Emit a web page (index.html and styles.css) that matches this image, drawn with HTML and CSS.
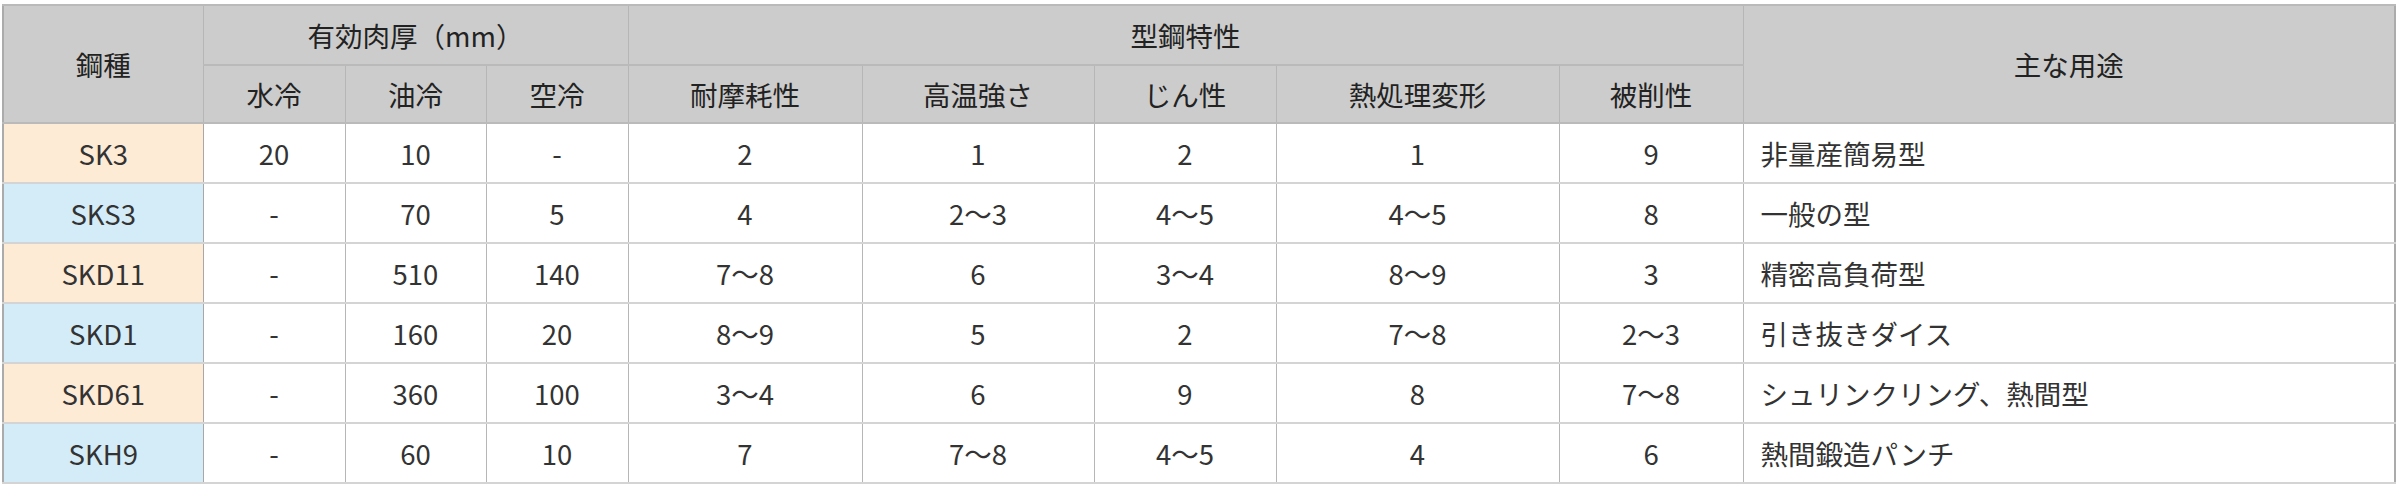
FILE: index.html
```html
<!DOCTYPE html>
<html lang="ja">
<head>
<meta charset="utf-8">
<title>型鋼特性</title>
<link rel="stylesheet" href="styles.css">
</head>
<body>
<table class="steel">
  <colgroup>
    <col class="c-name">
    <col class="c-w">
    <col class="c-o">
    <col class="c-a">
    <col class="c-wear">
    <col class="c-hot">
    <col class="c-tough">
    <col class="c-heat">
    <col class="c-mach">
    <col class="c-use">
  </colgroup>
  <thead>
    <tr class="h1">
      <th rowspan="2">鋼種</th>
      <th colspan="3">有効肉厚（mm）</th>
      <th colspan="5">型鋼特性</th>
      <th rowspan="2">主な用途</th>
    </tr>
    <tr class="h2">
      <th>水冷</th>
      <th>油冷</th>
      <th>空冷</th>
      <th>耐摩耗性</th>
      <th>高温強さ</th>
      <th>じん性</th>
      <th>熱処理変形</th>
      <th>被削性</th>
    </tr>
  </thead>
  <tbody>
    <tr>
      <td class="name orange">SK3</td>
      <td>20</td><td>10</td><td>-</td>
      <td>2</td><td>1</td><td>2</td><td>1</td><td>9</td>
      <td class="use">非量産簡易型</td>
    </tr>
    <tr>
      <td class="name blue">SKS3</td>
      <td>-</td><td>70</td><td>5</td>
      <td>4</td><td>2～3</td><td>4～5</td><td>4～5</td><td>8</td>
      <td class="use">一般の型</td>
    </tr>
    <tr>
      <td class="name orange">SKD11</td>
      <td>-</td><td>510</td><td>140</td>
      <td>7～8</td><td>6</td><td>3～4</td><td>8～9</td><td>3</td>
      <td class="use">精密高負荷型</td>
    </tr>
    <tr>
      <td class="name blue">SKD1</td>
      <td>-</td><td>160</td><td>20</td>
      <td>8～9</td><td>5</td><td>2</td><td>7～8</td><td>2～3</td>
      <td class="use">引き抜きダイス</td>
    </tr>
    <tr>
      <td class="name orange">SKD61</td>
      <td>-</td><td>360</td><td>100</td>
      <td>3～4</td><td>6</td><td>9</td><td>8</td><td>7～8</td>
      <td class="use">シュリンクリング、熱間型</td>
    </tr>
    <tr>
      <td class="name blue">SKH9</td>
      <td>-</td><td>60</td><td>10</td>
      <td>7</td><td>7～8</td><td>4～5</td><td>4</td><td>6</td>
      <td class="use">熱間鍛造パンチ</td>
    </tr>
  </tbody>
</table>
</body>
</html>
```
FILE: styles.css
```css
html, body {
  margin: 0;
  padding: 0;
  background: #ffffff;
}

body {
  padding: 4px 0 0 2px;
  font-family: "Noto Sans CJK JP", "Noto Sans", sans-serif;
  font-size: 27.5px;
  color: #333333;
}

.steel {
  border-collapse: collapse;
  table-layout: fixed;
  width: 2393px;
  border: 2px solid #ababab;
}

.c-name { width: 200px; }
.c-w { width: 142px; }
.c-o { width: 141px; }
.c-a { width: 142px; }
.c-wear { width: 234px; }
.c-hot { width: 232px; }
.c-tough { width: 182px; }
.c-heat { width: 283px; }
.c-mach { width: 184px; }
.c-use { width: 652px; }

.steel th,
.steel td {
  border-left: 1px solid #b6b6b6;
  border-right: 1px solid #b6b6b6;
  border-top: 2px solid #d4d4d4;
  border-bottom: 2px solid #d4d4d4;
  padding: 0;
  text-align: center;
  vertical-align: middle;
  font-weight: normal;
  line-height: 1.2;
}

.steel th {
  background: #cccccc;
  color: #222222;
  border-top-color: #bababa;
  border-bottom-color: #bababa;
}

.steel .h1 th {
  height: 58px;
}

.steel .h2 th {
  height: 56px;
}

.steel tbody td {
  height: 58px;
}

.steel td.name {
  border-right-color: #a8a8a8;
}

.steel .orange {
  background: #fdebd6;
}

.steel .blue {
  background: #d4ecf8;
}

.steel td.use {
  text-align: left;
  padding-left: 17px;
}
```
